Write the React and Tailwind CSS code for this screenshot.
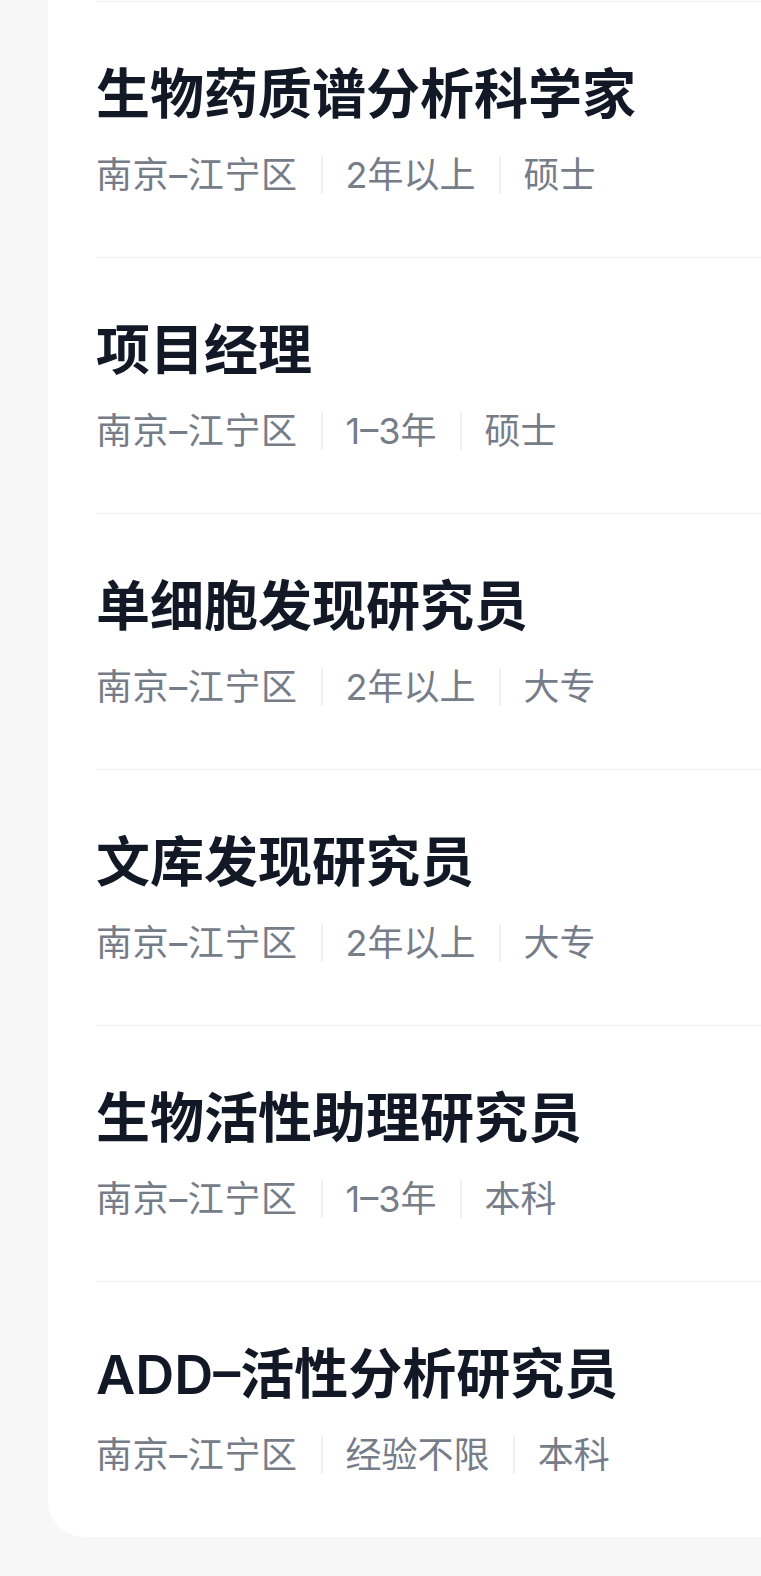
import React from 'react';

const jobs = [
  { title: '生物药质谱分析科学家', tags: ['南京–江宁区', '2年以上', '硕士'] },
  { title: '项目经理', tags: ['南京–江宁区', '1–3年', '硕士'] },
  { title: '单细胞发现研究员', tags: ['南京–江宁区', '2年以上', '大专'] },
  { title: '文库发现研究员', tags: ['南京–江宁区', '2年以上', '大专'] },
  { title: '生物活性助理研究员', tags: ['南京–江宁区', '1–3年', '本科'] },
  { title: 'ADD–活性分析研究员', tags: ['南京–江宁区', '经验不限', '本科'] },
];

function JobRow({ job }) {
  return (
    <div className="h-[256px] border-t border-[#f1f1f1] pt-[66px]">
      <h3 className="text-[54px] leading-[54px] font-semibold text-[#121826] whitespace-nowrap">{job.title}</h3>
      <div className="mt-[35px] h-[36px] flex items-center text-[36px] leading-[36px] text-[#767c88] whitespace-nowrap">
        {job.tags.map((tag, i) => (
          <React.Fragment key={tag + i}>
            {i > 0 && <span className="mx-[23px] w-[2px] h-[38px] bg-[#f0f0f0]"></span>}
            <span className={i === 0 ? 'tracking-[0.6px]' : ''}>{tag}</span>
          </React.Fragment>
        ))}
      </div>
    </div>
  );
}

export default function App() {
  return (
    <div
      className="min-h-[1576px] w-[761px] bg-[#f7f7f7] overflow-hidden"
      style={{ fontFamily: 'Inter, "Noto Sans CJK SC", sans-serif' }}
    >
      <div className="ml-[48px] w-[713px] bg-white rounded-bl-[36px]">
        <div className="h-px"></div>
        <div className="pl-[48px]">
          {jobs.map((job) => (
            <JobRow key={job.title} job={job} />
          ))}
        </div>
      </div>
    </div>
  );
}
